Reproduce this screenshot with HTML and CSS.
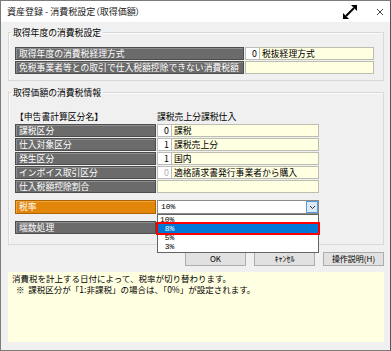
FILE: index.html
```html
<!DOCTYPE html>
<html lang="ja">
<head>
<meta charset="utf-8">
<title>資産登録 - 消費税設定（取得価額）</title>
<link rel="stylesheet" href="styles.css">
</head>
<body>
<div class="window">
  <div class="titlebar">
    <span class="title">資産登録 - 消費税設定（取得価額）</span>
    <svg class="expand" width="14" height="14" viewBox="0 0 14 14">
      <line x1="3" y1="11" x2="11" y2="3" stroke="#000" stroke-width="2"/>
      <polygon points="14,0 14,6 8,0" fill="#000"/>
      <polygon points="0,14 0,8 6,14" fill="#000"/>
    </svg>
    <svg class="close" width="8" height="8" viewBox="0 0 8 8">
      <line x1="1" y1="1" x2="7" y2="7" stroke="#444" stroke-width="1"/>
      <line x1="7" y1="1" x2="1" y2="7" stroke="#444" stroke-width="1"/>
    </svg>
  </div>
  <div class="content">
    <fieldset class="group g1">
      <legend>取得年度の消費税設定</legend>
      <div class="grid grid1">
        <div class="lbl">取得年度の消費税経理方式</div>
        <div class="code">0</div>
        <div class="val">税抜経理方式</div>
        <div class="lbl">免税事業者等との取引で仕入税額控除できない消費税額</div>
        <div class="val span2"></div>
      </div>
    </fieldset>
    <fieldset class="group g2">
      <legend>取得価額の消費税情報</legend>
      <div class="grid grid2">
        <div class="head">【申告書計算区分名】</div>
        <div class="head span2 head2">課税売上分課税仕入</div>
        <div class="lbl">課税区分</div>
        <div class="code">0</div>
        <div class="val">課税</div>
        <div class="lbl">仕入対象区分</div>
        <div class="code">1</div>
        <div class="val">課税売上分</div>
        <div class="lbl">発生区分</div>
        <div class="code">1</div>
        <div class="val">国内</div>
        <div class="lbl">インボイス取引区分</div>
        <div class="code disabled">0</div>
        <div class="val">適格請求書発行事業者から購入</div>
        <div class="lbl">仕入税額控除割合</div>
        <div class="val span2"></div>
      </div>
      <div class="grid grid2 lower">
        <div class="lbl orange">税率</div>
        <div class="select span2">
          <span class="sel-text">10%</span>
          <span class="arrow">
            <svg width="7" height="5" viewBox="0 0 7 5"><polyline points="1,1 3.5,3.5 6,1" fill="none" stroke="#333" stroke-width="1"/></svg>
          </span>
          <div class="dropdown">
            <div class="opt">10%</div>
            <div class="opt selected"> 8%</div>
            <div class="opt"> 5%</div>
            <div class="opt"> 3%</div>
          </div>
        </div>
        <div class="lbl short">端数処理</div>
        <div class="val plain span2"></div>
      </div>
    </fieldset>
    <div class="buttons">
      <div class="btn">OK</div>
      <div class="btn">ｷｬﾝｾﾙ</div>
      <div class="btn">操作説明(H)</div>
    </div>
    <div class="info">
      <p>消費税を計上する日付によって、税率が切り替わります。</p>
      <p class="note">※&nbsp;&nbsp;課税区分が「1:非課税」の場合は、「0%」が設定されます。</p>
    </div>
  </div>
</div>
</body>
</html>
```

FILE: styles.css
```css
* { box-sizing: border-box; }
html, body { margin: 0; padding: 0; background: #fff; }
body {
  font-family: "Noto Sans CJK JP", "Noto Sans", sans-serif;
  font-size: 8.8px;
  color: #000;
}
.window {
  width: 391px;
  height: 351px;
  border: 1px solid #7c7c7c;
  border-right-color: #555;
  background: #f0f0f0;
  display: flex;
  flex-direction: column;
}
.titlebar {
  height: 21px;
  background: #fff;
  display: flex;
  align-items: center;
  padding-left: 6px;
}
.title {
  color: #222;
  font-size: 9px;
  font-feature-settings: "palt";
  flex: 1;
}
.expand { margin-right: 19px; margin-top: 1px; }
.close { margin-right: 6px; margin-top: 1px; }

.content {
  flex: 1;
  padding: 0 6px 0 7px;
  display: flex;
  flex-direction: column;
}
.group {
  margin: 0;
  border: 1px solid #d8d8d8;
  box-shadow: inset 1px 1px 0 #fbfbfb;
  padding: 8px 6px 6px 6px;
  min-width: 0;
}
.group legend {
  padding: 0 2px;
  margin-left: -4px;
  line-height: 13px;
  height: 13px;
}
.g1 { margin-top: 4px; }
.g2 { margin-top: 5px; padding-top: 11px; padding-bottom: 10px; }

.grid {
  display: grid;
  row-gap: 1px;
  grid-auto-rows: 13px;
}
.grid1 { grid-template-columns: 230px 14px 115px; }
.grid2 { grid-template-columns: 142px 14px 148px; }
.span2 { grid-column: span 2; }

.lbl {
  background: #6b6b6b;
  color: #fff;
  border: 1px solid #4d4d4d;
  box-shadow: inset 1px 1px 0 #8e8e8e;
  margin-right: 1px;
  padding-left: 3px;
  line-height: 11px;
  white-space: nowrap;
  overflow: hidden;
}
.orange {
  background: #e2860a;
  border-color: #b06400;
  box-shadow: inset 1px 1px 0 #f0a640;
}
.code {
  background: #fff;
  border: 1px solid #bdbdbd;
  border-right: none;
  text-align: right;
  padding-right: 2px;
  line-height: 11px;
}
.code.disabled { color: #b0b0b0; }
.val {
  background: #ffffe1;
  border: 1px solid #bdbdb0;
  padding-left: 2px;
  line-height: 11px;
  white-space: nowrap;
}
.val.plain { background: #fff; }
.head { line-height: 13px; padding-left: 0; }

.lower {
  margin-top: 7px;
  grid-template-rows: 14px 13px;
  row-gap: 7px;
}
.select {
  position: relative;
  background: #fff;
  border: 1px solid #8a8a8a;
  display: flex;
  align-items: stretch;
}
.sel-text {
  flex: 1;
  font-family: "Liberation Mono", monospace;
  font-size: 8px;
  line-height: 12px;
  padding-left: 3px;
}
.arrow {
  width: 12px;
  background: #dbe9f6;
  border: 1px solid #5b9ad8;
  display: flex;
  align-items: center;
  justify-content: center;
}
.dropdown {
  position: absolute;
  top: 13px;
  left: -1px;
  right: -1px;
  background: #fff;
  border: 1px solid #646464;
  padding-bottom: 1px;
  z-index: 2;
}
.opt {
  height: 9px;
  line-height: 9px;
  font-family: "Liberation Mono", monospace;
  font-size: 8px;
  padding-left: 2px;
  white-space: pre;
}
.opt.selected {
  background: #0078d7;
  color: #fff;
  outline: 2px solid #ff0000;
}

.buttons {
  margin-top: 7px;
  display: flex;
  justify-content: flex-end;
  gap: 8px;
}
.btn {
  width: 61px;
  height: 14px;
  background: #e1e1e1;
  border: 1px solid #adadad;
  text-align: center;
  font-size: 8px;
  line-height: 12px;
}
.info {
  margin-top: 6px;
  height: 70px;
  background: #ffffe1;
  padding: 1px 4px;
  font-size: 8.5px;
}
.info p { margin: 0; line-height: 11px; }
.info .note { padding-left: 4px; }
```
